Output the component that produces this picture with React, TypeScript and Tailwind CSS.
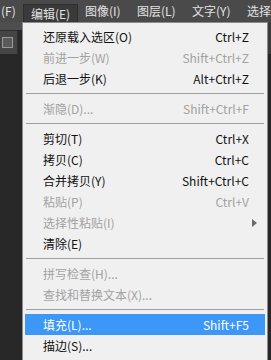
import React from "react";

type Item =
  | { sep: true }
  | {
      sep?: false;
      label: string;
      keys?: string;
      disabled?: boolean;
      active?: boolean;
      sub?: boolean;
    };

const menuBar = [
  { name: "(F)", w: "w-[23px] pl-[1px]" },
  { name: "编辑(E)", w: "w-[55px] pl-[7px]", open: true },
  { name: "图像(I)", w: "w-[52px] pl-[7px]" },
  { name: "图层(L)", w: "w-[55px] pl-[7px]" },
  { name: "文字(Y)", w: "w-[55px] pl-[7px]" },
  { name: "选择", w: "w-[40px] pl-[7px]" },
];

const items: Item[] = [
  { label: "还原载入选区(O)", keys: "Ctrl+Z" },
  { label: "前进一步(W)", keys: "Shift+Ctrl+Z", disabled: true },
  { label: "后退一步(K)", keys: "Alt+Ctrl+Z" },
  { sep: true },
  { label: "渐隐(D)...", keys: "Shift+Ctrl+F", disabled: true },
  { sep: true },
  { label: "剪切(T)", keys: "Ctrl+X" },
  { label: "拷贝(C)", keys: "Ctrl+C" },
  { label: "合并拷贝(Y)", keys: "Shift+Ctrl+C" },
  { label: "粘贴(P)", keys: "Ctrl+V", disabled: true },
  { label: "选择性粘贴(I)", disabled: true, sub: true },
  { label: "清除(E)" },
  { sep: true },
  { label: "拼写检查(H)...", disabled: true },
  { label: "查找和替换文本(X)...", disabled: true },
  { sep: true },
  { label: "填充(L)...", keys: "Shift+F5", active: true },
  { label: "描边(S)..." },
  { sep: true },
];

const font = {
  fontFamily: '"Noto Sans CJK SC", "Noto Sans", sans-serif',
};

export default function App() {
  return (
    <div
      className="w-[271px] h-[360px] overflow-hidden bg-[#282828] text-[12px] leading-none"
      style={font}
    >
      {/* Menu bar */}
      <div className="flex h-[22px] items-stretch bg-[#4a4a4a] text-[#e2e2e2]">
        {menuBar.map((m) => (
          <div
            key={m.name}
            className={`${m.w} shrink-0 flex items-center whitespace-nowrap ${
              m.open
                ? "mt-[4px] bg-[#3a3a3a] border-t border-l border-r border-[#2e2e2e]"
                : ""
            }`}
          >
            {m.name}
          </div>
        ))}
      </div>

      <div className="flex h-[338px]">
        {/* Left tool strip */}
        <div className="w-[22px] shrink-0 flex flex-col">
          <div className="h-[8px] bg-[#4e4e4e]" />
          <div className="h-[24px] w-[18px] bg-[#454545] border-t border-r border-[#2e2e2e] flex items-center pl-[2px]">
            <div className="w-[11px] h-[11px] border border-[#9a9a9a] bg-[#5a5a5a]" />
          </div>
        </div>

        {/* Dropdown menu */}
        <div className="w-[246px] shrink-0 bg-[#f0f0f0] border-t border-l border-r border-[#8c8c8c] pt-[3px] px-[2px]">
          {items.map((it, i) =>
            it.sep ? (
              <div key={i} className="h-[9px] flex items-center px-[1px]">
                <div className="w-full h-px bg-[#a0a0a0]" />
              </div>
            ) : (
              <div
                key={i}
                className={`h-[21px] flex items-center justify-between pl-[18px] pr-[16px] whitespace-nowrap ${
                  it.active
                    ? "bg-[#3c97f6] text-white"
                    : it.disabled
                    ? "text-[#a2a2a2]"
                    : "text-[#111]"
                }`}
              >
                <span>{it.label}</span>
                {it.keys && <span>{it.keys}</span>}
                {it.sub && (
                  <span className="w-0 h-0 mr-[-8px] border-y-[4px] border-y-transparent border-l-[5px] border-l-[#6a6a6a]" />
                )}
              </div>
            )
          )}
        </div>

        {/* Right edge */}
        <div className="flex-1 flex flex-col">
          <div className="h-[32px] bg-[#3c3c3c]" />
        </div>
      </div>
    </div>
  );
}
